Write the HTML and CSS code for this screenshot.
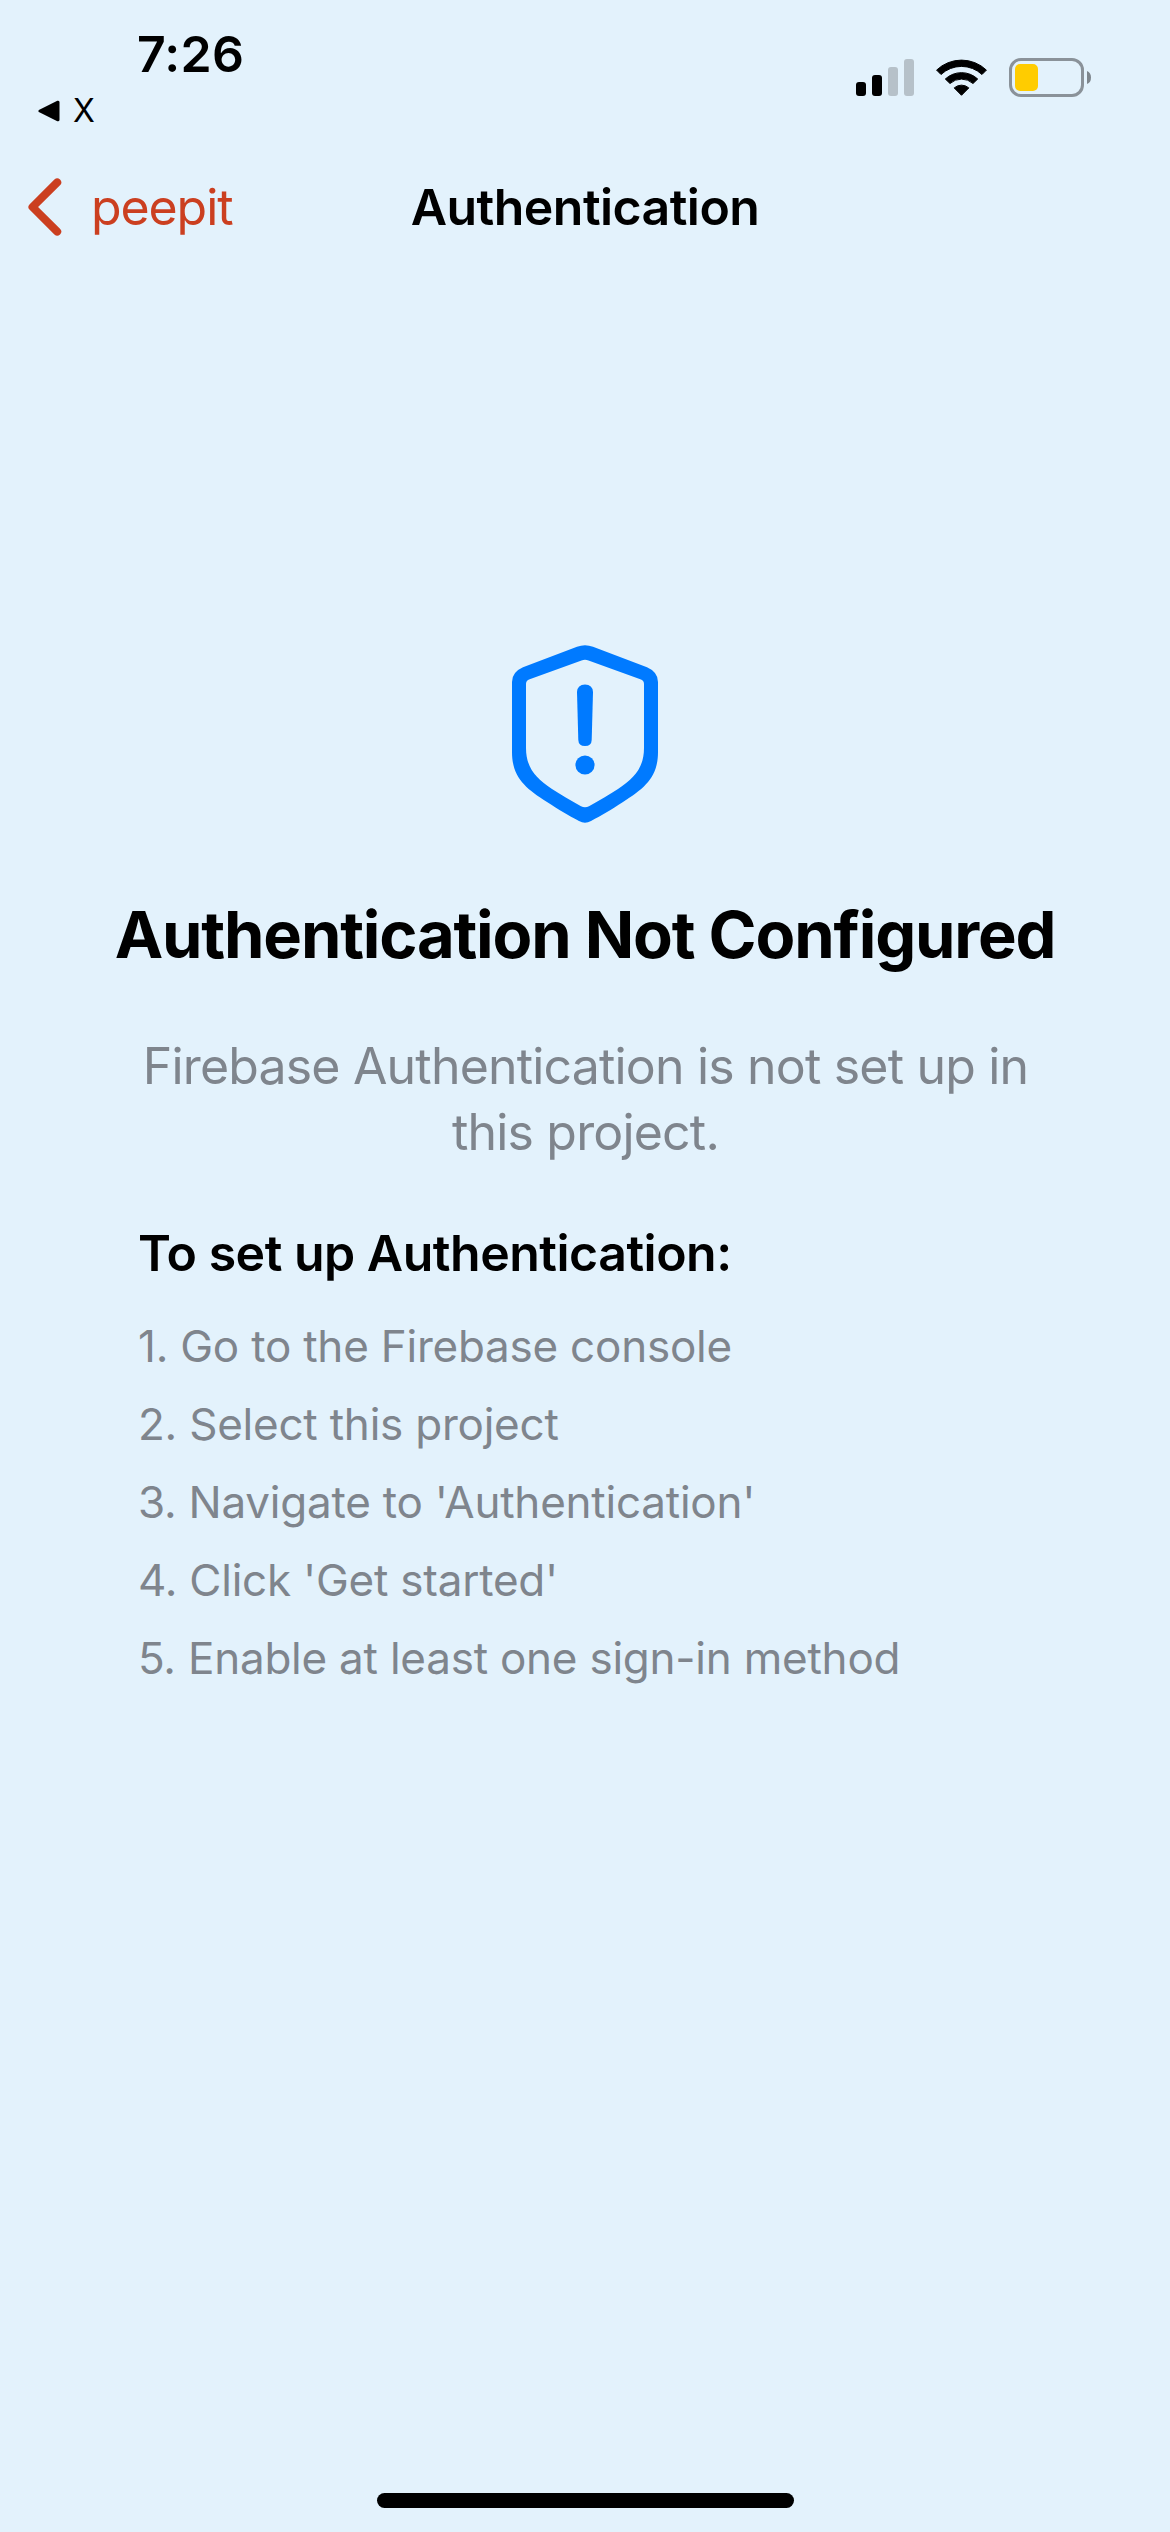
FILE: index.html
```html
<!DOCTYPE html>
<html lang="en">
<head>
  <meta charset="UTF-8">
  <title>Authentication</title>
  <link rel="stylesheet" href="styles.css">
</head>
<body>
<div class="status-bar">
  <div class="status-left">
    <div class="time">7:26</div>
    <div class="return-app">
      <svg width="22" height="22" viewBox="0 0 22 22">
        <path d="M2 11 L20 2.2 V19.8 Z" fill="#000" stroke="#000" stroke-width="3" stroke-linejoin="round"/>
      </svg>
      <span>X</span>
    </div>
  </div>
  <div class="status-icons">
    <svg width="58" height="37" viewBox="0 0 58 37">
      <rect x="0" y="23" width="10" height="14" rx="3"/>
      <rect x="16" y="16" width="10" height="21" rx="3"/>
      <rect class="bar-off" x="32" y="8" width="10" height="29" rx="3"/>
      <rect class="bar-off" x="48" y="0" width="10" height="37" rx="3"/>
    </svg>
    <svg width="51" height="37" viewBox="0 0 51 37">
      <g stroke="#000" stroke-linejoin="round">
        <path d="M.6 11.1 A36 36 0 0 1 50.4 11.1 L46 15.5 A30 30 0 0 0 5 15.5 Z"/>
        <path d="M9.3 20 A23.8 23.8 0 0 1 41.7 20 L37 24.5 A17.2 17.2 0 0 0 14 24.5 Z"/>
        <path d="M18.2 28.9 A11 11 0 0 1 32.8 28.9 L25.5 36.3 Z"/>
      </g>
    </svg>
    <svg width="82" height="39" viewBox="0 0 82 39">
      <rect x="1.5" y="1.5" width="72" height="36" rx="10.5" fill="none" stroke="#8a9299" stroke-width="3"/>
      <rect x="6" y="6" width="23" height="27" rx="5" fill="#ffcc00"/>
      <path d="M78 13 Q82 14.5 82 19.5 T78 26 Z" fill="#7e868c"/>
    </svg>
  </div>
</div>

<div class="nav-bar">
  <a class="back">
    <svg width="34" height="58" viewBox="0 0 34 58">
      <path d="M29.2 4.4 L4.5 29 L29.2 53.6" fill="none" stroke="currentColor" stroke-width="8" stroke-linecap="round" stroke-linejoin="round"/>
    </svg>
    <span>peepit</span>
  </a>
  <div class="nav-title">Authentication</div>
</div>

<main class="content">
  <svg class="shield" width="146" height="178" viewBox="0 0 146 178">
    <path fill-rule="evenodd" d="M65 1.8 Q73 -1.5 81 1.8 L135 22.3 Q146 27 146 37 V107 C146 132 133 143 111 157 C99 165 90 170 79 176 Q73 179.5 67 176 C56 170 47 165 35 157 C13 143 0 132 0 107 V37 Q0 27 11 22.3 Z
      M69.5 15.4 L17 34.6 Q14 35.8 14 39 V103 C14 123 24 133 40 144 C49 150 58 155 69 161.2 Q73 163.2 77 161.2 C88 155 97 150 106 144 C122 133 132 123 132 103 V39 Q132 35.8 129 34.6 L76.5 15.4 Q73 14 69.5 15.4 Z"/>
    <path d="M65 47 Q65.5 39.5 73 39.5 T81 47 L79.7 95 Q79.5 101 73 101 T66.3 95 Z"/>
    <circle cx="73" cy="120" r="9.6"/>
  </svg>
  <h1>Authentication Not Configured</h1>
  <p class="message">Firebase Authentication is not set up in this project.</p>
  <section class="setup">
    <h2>To set up Authentication:</h2>
    <div class="steps">
      <div>1. Go to the Firebase console</div>
      <div>2. Select this project</div>
      <div>3. Navigate to 'Authentication'</div>
      <div>4. Click 'Get started'</div>
      <div>5. Enable at least one sign-in method</div>
    </div>
  </section>
</main>

<div class="home-indicator"></div>
</body>
</html>
```

FILE: styles.css
```css
html, body {
  margin: 0;
  padding: 0;
  height: 100%;
}

body {
  display: flex;
  flex-direction: column;
  align-items: stretch;
  background: #e3f2fc;
  color: #000;
  font-family: Inter, sans-serif;
  font-size: 50px;
  line-height: 60px;
  overflow: hidden;
}

svg {
  display: block;
  flex: none;
}

.status-bar {
  height: 141px;
  display: flex;
  flex-direction: row;
  justify-content: space-between;
  padding-right: 79px;
}

.status-left {
  padding-top: 24px;
}

.time {
  margin-left: 137px;
  font-weight: 600;
  letter-spacing: 0.25px;
}

.return-app {
  display: flex;
  align-items: center;
  gap: 13px;
  margin: 7px 0 0 38px;
  font-size: 32px;
  line-height: 40px;
}

.status-icons {
  display: flex;
  align-items: center;
  gap: 22px;
  height: 39px;
  margin-top: 58px;
}

.bar-off {
  fill: #b6c1c9;
}

.nav-bar {
  height: 132px;
  display: grid;
  grid-template-columns: 1fr auto 1fr;
  align-items: center;
}

.back {
  display: flex;
  align-items: center;
  gap: 29px;
  padding-left: 28px;
  color: #cb3f20;
  letter-spacing: -1.1px;
}

.nav-title {
  font-weight: 600;
  letter-spacing: -0.55px;
}

.content {
  flex: 1;
  display: flex;
  flex-direction: column;
  padding: 372px 96px 0 96px;
}

.shield {
  align-self: center;
  fill: #007aff;
}

h1 {
  margin: 72px 0 0 0;
  font-size: 65px;
  font-weight: 700;
  line-height: 80px;
  letter-spacing: -1.18px;
  text-align: center;
  white-space: nowrap;
}

.message {
  margin: 58px 24px 0 25px;
  color: #7f858d;
  line-height: 66px;
  letter-spacing: -0.82px;
  text-align: center;
}

.setup {
  margin: 58px 0 0 42px;
}

h2 {
  margin: 0;
  font-size: 50px;
  font-weight: 600;
  letter-spacing: -0.5px;
}

.steps {
  display: flex;
  flex-direction: column;
  gap: 24px;
  margin-top: 36px;
  color: #7f858d;
  font-size: 44px;
  line-height: 54px;
  letter-spacing: -0.23px;
}

.home-indicator {
  align-self: center;
  width: 417px;
  height: 15px;
  margin-bottom: 24px;
  border-radius: 8px;
  background: #000;
}
```
